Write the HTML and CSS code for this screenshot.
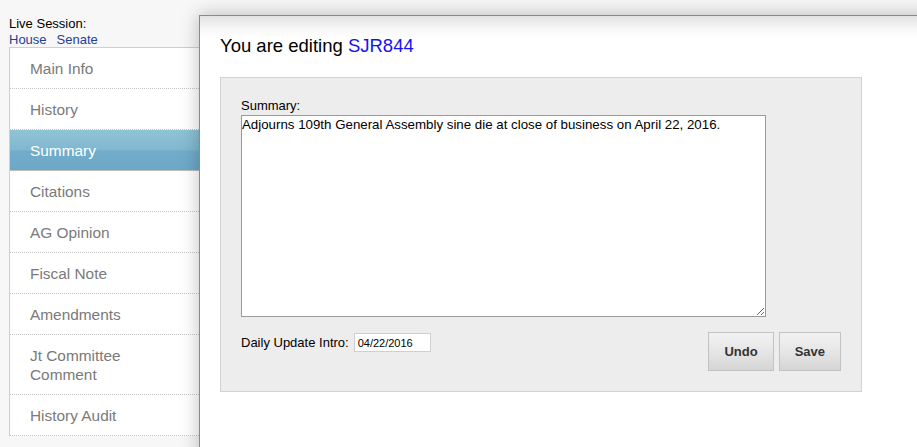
FILE: index.html
```html
<!DOCTYPE html>
<html>
<head>
<meta charset="utf-8">
<link rel="stylesheet" href="styles.css">
</head>
<body>
<div class="page">
  <div class="left">
    <div class="live">Live Session:</div>
    <div class="links"><a href="#">House</a><a href="#">Senate</a></div>
    <ul class="nav">
      <li>Main Info</li>
      <li>History</li>
      <li class="active">Summary</li>
      <li>Citations</li>
      <li>AG Opinion</li>
      <li>Fiscal Note</li>
      <li>Amendments</li>
      <li>Jt Committee<br>Comment</li>
      <li>History Audit</li>
    </ul>
  </div>
</div>
<div class="dialog">
  <h1 class="title">You are editing <span class="bill">SJR844</span></h1>
  <div class="panel">
    <label class="lbl">Summary:</label>
    <textarea class="summary">Adjourns 109th General Assembly sine die at close of business on April 22, 2016.</textarea>
    <div class="row">
      <div class="intro">
        <span>Daily Update Intro:</span>
        <input class="date" type="text" value="04/22/2016">
      </div>
      <div class="btns">
        <button class="btn">Undo</button>
        <button class="btn">Save</button>
      </div>
    </div>
  </div>
</div>
</body>
</html>
```
FILE: styles.css
```css
html, body {
  margin: 0;
  padding: 0;
  background: #f7f7f7;
  font-family: "Liberation Sans", Arial, sans-serif;
  overflow: hidden;
  height: 447px;
}
.page {
  padding: 16px 0 0 9px;
}
.left {
  width: 215px;
}
.live, .links {
  font-size: 13px;
  line-height: 16px;
  color: #000;
}
.links {
  line-height: 15px;
}
.links a {
  color: #1f3f96;
  text-decoration: none;
  margin-right: 10px;
}
.nav {
  list-style: none;
  margin: 0;
  padding: 0;
  background: #fff;
  border: 1px solid #cfcfcf;
  border-bottom: none;
}
.nav li {
  font-size: 15.4px;
  line-height: 19px;
  padding: 11px 0 10px 20px;
  color: #7a7a7a;
  border-bottom: 1px dotted #c4c4c4;
}
.nav li.active {
  background: linear-gradient(#8fc3d7, #80b8d0 50%, #72acca 52%, #6ca8c7);
  color: #fff;
}
.dialog {
  position: absolute;
  left: 199px;
  top: 15px;
  width: 760px;
  height: 500px;
  background: linear-gradient(#e2e2e2, #f6f6f6 12px, #fff 22px);
  border: 1px solid #8a8a8a;
  box-shadow: 0 0 18px rgba(0,0,0,0.25);
  padding: 0 0 0 20px;
  box-sizing: border-box;
}
.title {
  margin: 0;
  padding-top: 19px;
  font-size: 18.5px;
  font-weight: normal;
  line-height: 22px;
  color: #000;
  height: 61px;
  box-sizing: border-box;
}
.bill {
  color: #1414f0;
}
.panel {
  width: 642px;
  height: 315px;
  box-sizing: border-box;
  background: #ededed;
  border: 1px solid #d2d2d2;
  padding: 20px 20px 0 20px;
}
.lbl {
  display: block;
  font-size: 13px;
  line-height: 16px;
  margin-bottom: 1px;
}
.summary {
  display: block;
  width: 525px;
  height: 202px;
  box-sizing: border-box;
  border: 1px solid #999;
  background: #fff;
  font-family: "Liberation Sans", Arial, sans-serif;
  font-size: 13.3px;
  line-height: 15px;
  padding: 1px 0;
  margin: 0;
  resize: both;
}
.row {
  display: flex;
  justify-content: space-between;
  align-items: flex-start;
  margin-top: 15px;
}
.intro {
  display: flex;
  align-items: center;
  gap: 5px;
  font-size: 13px;
  margin-top: 1px;
}
.date {
  width: 77px;
  height: 19px;
  box-sizing: border-box;
  border: 1px solid #cfcfcf;
  font-family: "Liberation Sans", Arial, sans-serif;
  font-size: 11px;
  padding: 0 3px;
  margin: 0;
  background: #fff;
}
.btns {
  display: flex;
  gap: 5px;
}
.btn {
  height: 39px;
  padding: 0 15px;
  border: 1px solid #c2c2c2;
  background: linear-gradient(#f2f2f2, #e6e6e6 50%, #d5d5d5);
  font-family: "Liberation Sans", Arial, sans-serif;
  font-weight: bold;
  font-size: 13px;
  color: #333;
  margin: 0;
}
```
